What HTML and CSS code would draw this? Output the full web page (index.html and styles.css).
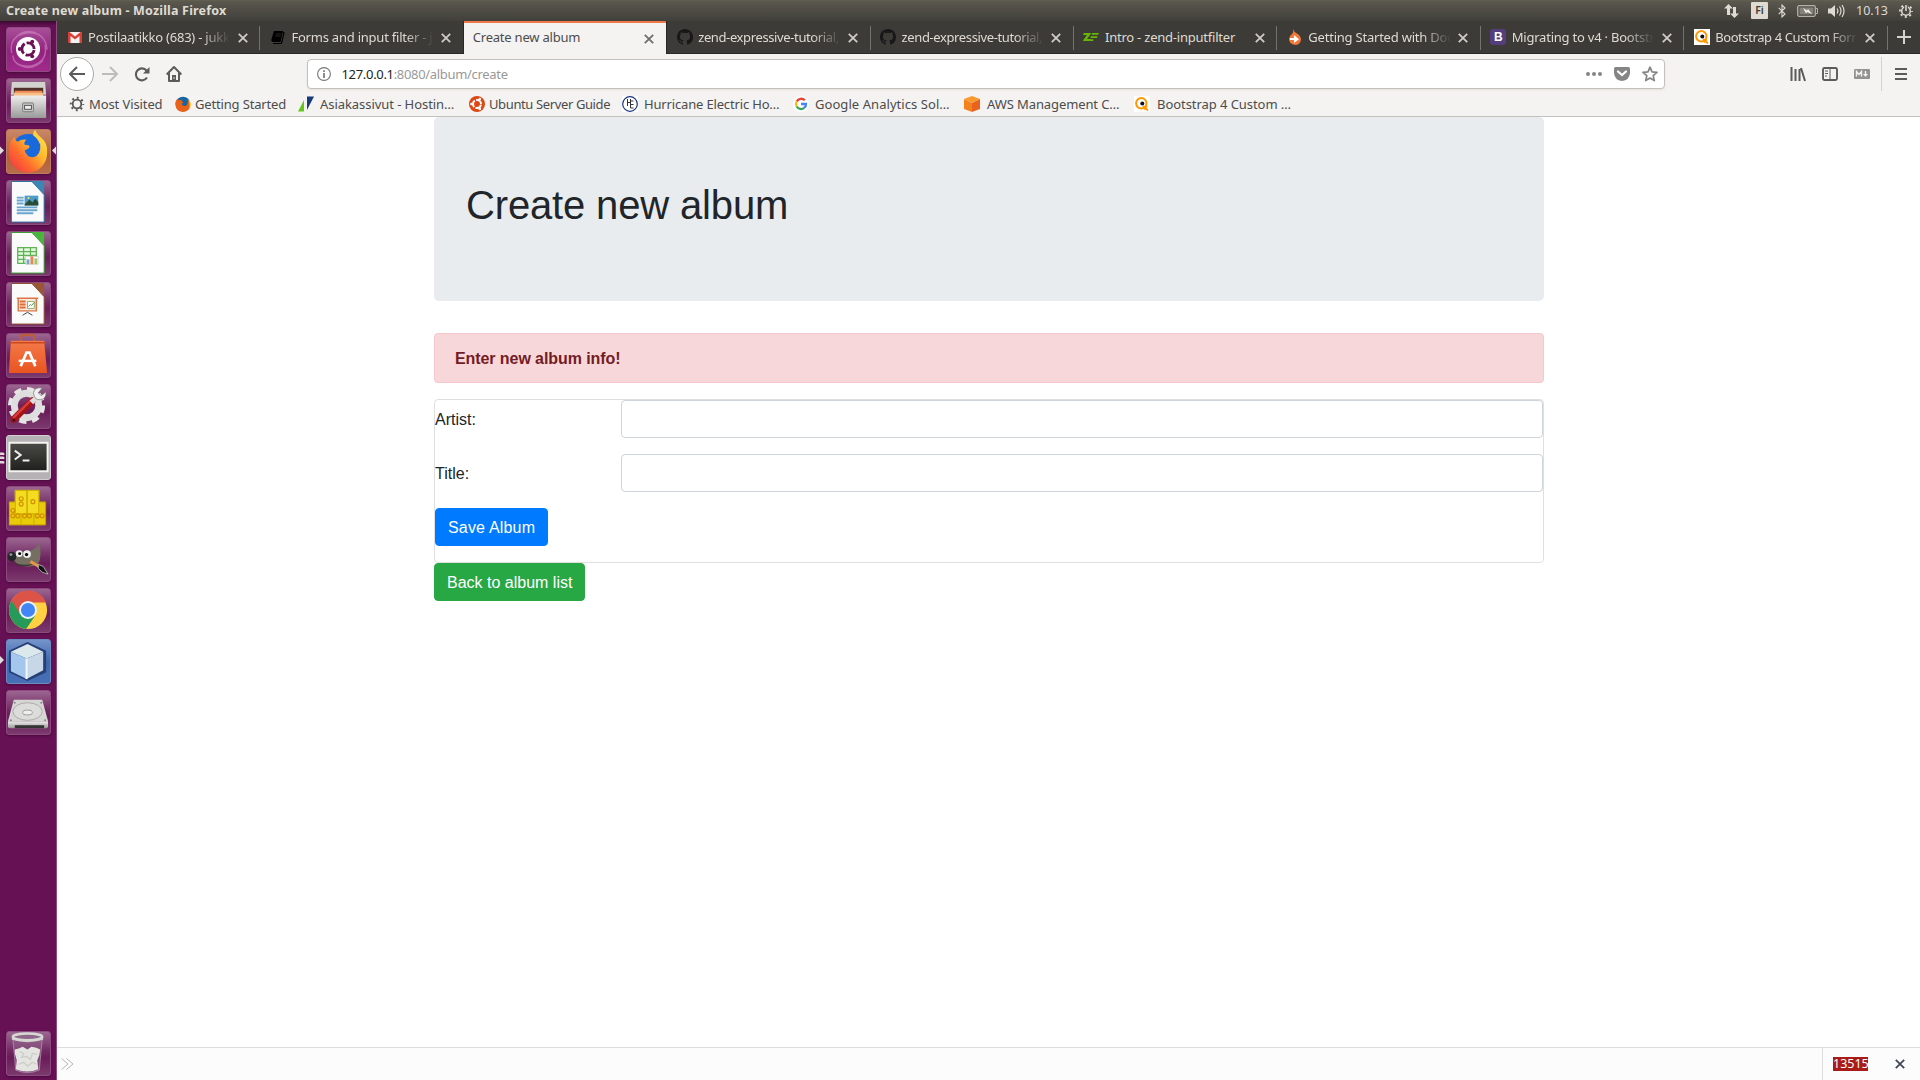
FILE: index.html
```html
<!DOCTYPE html>
<html lang="en">
<head>
<meta charset="utf-8">
<title>Create new album</title>
<link rel="stylesheet" href="styles.css">
</head>
<body>
<svg class="defs" width="0" height="0">
  <defs>
    <linearGradient id="silver" x1="0" y1="0" x2="0" y2="1"><stop offset="0" stop-color="#eeeeec"/><stop offset="1" stop-color="#999"/></linearGradient>
    <linearGradient id="orange" x1="0" y1="0" x2="0" y2="1"><stop offset="0" stop-color="#f47a4a"/><stop offset="1" stop-color="#e95420"/></linearGradient>
    <linearGradient id="flame" x1="1" y1="0" x2="0" y2="1"><stop offset="0" stop-color="#fff14f"/><stop offset=".4" stop-color="#ffb52e"/><stop offset=".65" stop-color="#ff6b2d"/><stop offset="1" stop-color="#f02b4b"/></linearGradient>
    <linearGradient id="screen" x1="0" y1="0" x2="0" y2="1"><stop offset="0" stop-color="#4a4a46"/><stop offset="1" stop-color="#1f1f1d"/></linearGradient>
    <symbol id="x" viewBox="0 0 10 10"><path d="M.8.8l8.4 8.4M9.2.8L.8 9.2" stroke="currentColor" stroke-width="1.8" fill="none"/></symbol>
    <symbol id="cat" viewBox="0 0 16 16"><path fill="#191717" d="M8 0C3.58 0 0 3.58 0 8c0 3.54 2.29 6.53 5.47 7.59.4.07.55-.17.55-.38 0-.19-.01-.82-.01-1.49-2.01.37-2.53-.49-2.69-.94-.09-.23-.48-.94-.82-1.13-.28-.15-.68-.52-.01-.53.63-.01 1.08.58 1.23.82.72 1.21 1.87.87 2.33.66.07-.52.28-.87.51-1.07-1.78-.2-3.64-.89-3.64-3.95 0-.87.31-1.59.82-2.15-.08-.2-.36-1.02.08-2.12 0 0 .67-.21 2.2.82a7.6 7.6 0 0 1 4 0c1.53-1.04 2.2-.82 2.2-.82.44 1.1.16 1.92.08 2.12.51.56.82 1.27.82 2.15 0 3.07-1.87 3.75-3.65 3.95.29.25.54.73.54 1.48 0 1.07-.01 1.93-.01 2.2 0 .21.15.46.55.38A8.01 8.01 0 0 0 16 8c0-4.42-3.58-8-8-8z"/></symbol>
    <symbol id="q" viewBox="0 0 16 16"><path fill="#fff" d="M0 0h16v16H0z"/><circle cx="7.3" cy="7.3" r="5.2" fill="none" stroke="#ff9800" stroke-width="2"/><path d="M9 10l5 4.5M10 13.5l3-3" stroke="#ff9800" stroke-width="1.7"/><circle cx="8.3" cy="7.5" r="2" fill="#111"/></symbol>
  </defs>
</svg>

<header class="panel">
  <span class="panel-title">Create new album - Mozilla Firefox</span>
  <div class="indicators">
    <svg class="i-net" viewBox="0 0 15 14"><path fill="#dfdbd2" d="M4.5 0L9 4.500H6V11H3V4.500H0zM10.500 14L6 9.500h3V3h3v6.500h3z"/></svg>
    <span class="i-lang">Fi</span>
    <svg class="i-bt" viewBox="0 0 8 14"><path d="M.7 3.800l6.300 6.200L4 13V1l3 3-6.300 6.200" fill="none" stroke="#dfdbd2" stroke-width="1.100"/></svg>
    <svg class="i-bat" viewBox="0 0 21 12"><rect x=".7" y=".7" width="17.600" height="10.600" rx="1.500" fill="none" stroke="#b5b1a9" stroke-width="1.300"/><rect x="2.500" y="2.500" width="14" height="7" fill="#85827a"/><path d="M18.500 3.500h2v5h-2" fill="none" stroke="#b5b1a9"/><path d="M6 3l4 2.500 1-1.500 4 5-5-2-1 1.500z" fill="#eee"/></svg>
    <svg class="i-vol" viewBox="0 0 17 14"><path fill="#dfdbd2" d="M0 4.500h3L7 1v12L3 9.500H0z"/><path d="M9 4.500q1.800 2.500 0 5M11.500 2.500q3 4.500 0 9M14 1q4 6 0 12" fill="none" stroke="#dfdbd2" stroke-width="1.200"/></svg>
    <span class="clock">10.13</span>
    <svg class="i-cog" viewBox="0 0 14 14"><circle cx="7" cy="7" r="4.300" fill="none" stroke="#dfdbd2" stroke-width="1.500"/><circle cx="7" cy="7" r="6" fill="none" stroke="#dfdbd2" stroke-width="1.800" stroke-dasharray="2 2.712" stroke-dashoffset="1"/><path d="M5.200 0h3.600v6.500H5.200z" fill="#504e47"/><path d="M7 1v6" stroke="#dfdbd2" stroke-width="1.500"/></svg>
  </div>
</header>

<div class="desktop">
<nav class="launcher">
  <div class="tile dash"><svg viewBox="0 0 46 46"><path d="M6 27Q2 9 22 6q18-1 20 17M40 18q3 18-15 22-17 1-18-11M11 37Q25 47 38 34M34 8q-15-9-27 6" fill="none" stroke="#d990c8" stroke-opacity=".55" stroke-width="1.500"/><circle cx="22.500" cy="22.500" r="12.300" fill="#fff"/><circle cx="22.500" cy="22.500" r="6.300" fill="none" stroke="#6b1255" stroke-width="2.900" stroke-dasharray="11.200 2" stroke-dashoffset="-1"/><g fill="#6b1255"><circle cx="14" cy="22.500" r="2"/><circle cx="26.800" cy="15" r="2"/><circle cx="26.800" cy="30" r="2"/></g></svg></div>
  <div class="tile"><svg viewBox="0 0 46 46"><path d="M6 4h34l1 13H5z" fill="#d2d2cf"/><path d="M8 10h30v9H8z" fill="#503028"/><path d="M9 13h28v3H9z" fill="#ed8850"/><path d="M8 15h30v4H8z" fill="#f7c089"/><path d="M5 18h36v22q0 1-1 1H6q-1 0-1-1z" fill="url(#silver)"/><rect x="17" y="25.500" width="11" height="9" rx="1" fill="#c9c9c9" stroke="#777"/><rect x="19" y="28" width="7" height="4" fill="#eee" stroke="#555"/></svg></div>
  <div class="tile fox"><svg viewBox="0 0 46 46"><circle cx="23" cy="23" r="18" fill="#1769dc"/><path d="M3 18Q5 11 9 8q0 4 3 5 4-3 9-2-3 2-2 5 5 0 5 2 0 2-5 4 2 7 9 7 8-3 7-13-3-7-7-9-1-4 2-6 1 4 6 8 7 6 6 15A19.500 19.500 0 0 1 3 26z" fill="url(#flame)"/></svg></div>
  <div class="tile"><svg viewBox="0 0 46 46"><path d="M5.500 1.500h21L39 15v28H5.500z" fill="#fafafa" stroke="#276d9c"/><path d="M26 1h13v14z" fill="#3c86b5"/><path d="M11 17h7v2h-7zm0 3h7v2h-7zm0 3h7v2h-7zm0 4h21v2H11zm0 3h21v2H11zm0 3h17v2H11z" fill="#6ba6cf"/><path d="M19 16h14v10H19z" fill="#4c9bc8"/><path d="M19 25l5-5 3 3 3-4 3 4v3H19z" fill="#274d37"/><circle cx="23" cy="18.500" r="1" fill="#ffe86c"/></svg></div>
  <div class="tile"><svg viewBox="0 0 46 46"><path d="M5.500 1.500h21L39 15v28H5.500z" fill="#fafafa" stroke="#359b2d"/><path d="M26 1h13v14z" fill="#49b53d"/><path d="M12 17h19v16H12zM12 21h19M12 25h19M12 29h19M18 17v16M25 17v16" fill="#e5f9df" stroke="#5fb253" stroke-width="1.300"/><path d="M20 26h13v8H20z" fill="#fff" stroke="#bbb" stroke-width=".5"/><path d="M21 29h3v5h-3z" fill="#72a8d4"/><path d="M25 26h3v8h-3z" fill="#ef8450"/><path d="M29 28h3v6h-3z" fill="#9fc773"/></svg></div>
  <div class="tile"><svg viewBox="0 0 46 46"><path d="M5.500 1.500h21L39 15v28H5.500z" fill="#fafafa" stroke="#8d482a"/><path d="M26 1h13v14z" fill="#9b5735"/><path d="M11 16.500h22M12.500 17v12.500h18.500V17" fill="#fbe8dc" stroke="#d97748" stroke-width="1.500"/><path d="M14 20h6m-6 3h6m-6 3h6" stroke="#db6c38" stroke-width="2"/><path d="M22 20h7v7h-7z" fill="#fff" stroke="#8ab26d"/><path d="M23 25l2-2 1 1 3-3" stroke="#4d9847" fill="none"/><path d="M17 34l5-3 5 3" stroke="#444" fill="none"/></svg></div>
  <div class="tile"><svg viewBox="0 0 46 46"><path d="M15 13V4q0-2 2-2h10q2 0 2 2v9" fill="none" stroke="#bd5c3d" stroke-width="2.500"/><path d="M5 8h34l3 33H3z" fill="url(#orange)"/><path d="M4 10h37" stroke="#c94a1f" stroke-width="1.500"/><path d="M15 34l6-14h3l6 14" fill="none" stroke="#fff" stroke-width="2.800"/><path d="M13 28.500h18" stroke="#fff" stroke-width="2.500"/></svg></div>
  <div class="tile"><svg viewBox="0 0 46 46"><circle cx="21" cy="22" r="12.500" fill="none" stroke="#dedede" stroke-width="7"/><circle cx="21" cy="22" r="17" fill="none" stroke="#e5e5e5" stroke-width="4" stroke-dasharray="7.400 5.950"/><path d="M8 36l19-19" stroke="#a31515" stroke-width="7" stroke-linecap="round"/><path d="M8 34l18-18" stroke="#d73c3c" stroke-width="2.500" stroke-linecap="round"/><path d="M26 19l5-5" stroke="#ddd" stroke-width="5"/><path d="M37 4q-8-1-9 5 1 8 7 7 6 0 6-8l-5 4-3-3z" fill="#eee" stroke="#777" stroke-width=".7"/><circle cx="8" cy="37" r="1.500" fill="#4b1020"/></svg></div>
  <div class="tile term"><svg viewBox="0 0 46 46"><path d="M3.500 8h39v29h-39z" fill="url(#screen)" stroke="#f3f3f1" stroke-width="2"/><path d="M9 16l6 4.500-6 4.500M17 26h7" fill="none" stroke="#eee" stroke-width="2"/></svg></div>
  <div class="tile"><svg viewBox="0 0 46 46"><path d="M3 16h37v24H3z" fill="#e9cb09"/><path d="M9 4h25v24H9z" fill="#f4dc20"/><path d="M9.500 4.500h12v24h-12zM21.500 4.500h12v24h-12zM3.500 16.500h6M3.500 16.500v23h12v-11M15.500 39.500h13v-11M28.500 39.500h12v-23h-6" fill="none" stroke="#cda900"/><g fill="none" stroke="#d09000" stroke-width="1.200"><circle cx="15.500" cy="13" r="2"/><circle cx="15.500" cy="18.500" r="2"/><circle cx="27.500" cy="16" r="2"/><circle cx="7" cy="25" r="2"/><circle cx="7" cy="30.500" r="2"/><circle cx="12" cy="30.500" r="2"/><circle cx="19" cy="30.500" r="2"/><circle cx="24" cy="30.500" r="2"/><circle cx="32" cy="30.500" r="2"/><circle cx="37" cy="30.500" r="2"/></g></svg></div>
  <div class="tile"><svg viewBox="0 0 46 46"><path d="M5 20q5-7 12-5 12 1 17-9 3 15-1 21-10 7-22 0z" fill="#756f63"/><path d="M6 24q8 7 24 3-12 6-22 0z" fill="#3e392f"/><ellipse cx="6" cy="20" rx="4.500" ry="5" fill="#25272a"/><circle cx="5" cy="18" r="1.500" fill="#999"/><circle cx="13.500" cy="17" r="3.400" fill="#eee"/><circle cx="21.500" cy="17.500" r="4" fill="#eee"/><circle cx="14" cy="17" r="1.500"/><circle cx="21" cy="18" r="1.700"/><path d="M25 25l10 6" stroke="#e89745" stroke-width="3"/><path d="M33 28l5 2 5 8q-7-1-10-6z" fill="#141414" stroke="#ddd" stroke-width=".7"/></svg></div>
  <div class="tile"><svg viewBox="0 0 46 46"><circle cx="22.500" cy="22.500" r="19.500" fill="#ffd140"/><path d="M22.500 22.500L5.600 12.700a19.500 19.500 0 0 0 14.900 29.200l9-13z" fill="#269b59"/><path d="M5.600 12.700a19.500 19.500 0 0 1 35.200 2H22.500l-8 12z" fill="#dc5347"/><circle cx="22.500" cy="22.500" r="9.200" fill="#eef2f6"/><circle cx="22.500" cy="22.500" r="7.200" fill="#4285f4"/></svg></div>
  <div class="tile cube"><svg viewBox="0 0 46 46"><path d="M22 3l19 9v22L22 43 3 34V12z" fill="#263f75"/><path d="M22 5l16 8-17 7-16-7z" fill="#dce9ec"/><path d="M5 13l16 7v21L5 33z" fill="#a5c6ed"/><path d="M38 13l-17 7v21l17-9z" fill="#c7d7e7"/><path d="M21 20v21" stroke="#f0f8ff" stroke-width="2"/></svg></div>
  <div class="tile"><svg viewBox="0 0 46 46"><path d="M8 10h29l6 22H2z" fill="#d6d6d4"/><path d="M2 32h41v5q0 2-2 2H4q-2 0-2-2z" fill="url(#silver)"/><path d="M9 36h30v3H9z" fill="#343434"/><ellipse cx="22" cy="22" rx="15" ry="9" fill="#dcdcda" stroke="#aaa"/><ellipse cx="22" cy="23" rx="5" ry="2.500" fill="#eee" stroke="#999"/><g fill="#888"><circle cx="9" cy="13" r="1"/><circle cx="36" cy="13" r="1"/><circle cx="5" cy="31" r="1"/><circle cx="40" cy="31" r="1"/></g></svg></div>
  <div class="tile trash"><svg viewBox="0 0 46 46"><path d="M7 8h30l-3 32q-12 5-24 0z" fill="#966d92" fill-opacity=".45" stroke="#baa0b7" stroke-width=".7"/><path d="M9 19l4-1 4-2 5 3 4-3 5 1 4 2-1 6-2 5 1 9q-11 5-23 0l1-9-2-7z" fill="#e4e4e1"/><path d="M14 21l4 2-2 4 5-1 4 3 2-6 5 1M13 34l5-2 4 4 5-4 4 2" fill="none" stroke="#cbcbc8" stroke-width="1.300"/><path d="M6 6v3q16 5 32 0V6q-16 5-32 0" fill="#c8c8c5"/><ellipse cx="22" cy="6" rx="15" ry="3.500" fill="#8d6888" stroke="#d7d7d4" stroke-width="2.500"/></svg></div>
  <svg class="marks" viewBox="0 0 57 1059"><path d="M0 125.500l4 4-4 4zM56 125.500l-4 4 4 4zM0 635l4 4-4 4z" fill="#e0dde0"/><path d="M0 431.500h3q1.500 0 1.500 1.500T3 434H0zM0 435.500h3q1.500 0 1.500 1.500T3 438H0zM0 440h3q1.500 0 1.500 1.500T3 442.500H0z" fill="#ded8dd"/></svg>
</nav>

<main class="browser">
  <div class="tabs">
    <div class="tab sep"><svg viewBox="0 0 16 16"><path d="M1 3h14v11H1z" fill="#f2f2f2"/><path d="M1 3v11h2.500V7L8 10.500 12.500 7v7H15V3h-1.500L8 7.500 2.500 3z" fill="#d93f35"/></svg><span class="label fade">Postilaatikko (683) - jukk</span><svg class="close"><use href="#x"/></svg></div>
    <div class="tab"><svg viewBox="0 0 16 16"><path d="M4 2h9l-2.500 11H2.500q-2-1-1-3z" fill="#000"/><path d="M13 3l1 1-2.500 10.500H3" fill="none" stroke="#000" stroke-width="1.200"/><path d="M6 5h5M5.500 7h5" stroke="#3c3b37" stroke-width=".7"/></svg><span class="label fade">Forms and input filter - ja</span><svg class="close"><use href="#x"/></svg></div>
    <div class="tab active"><span class="label">Create new album</span><svg class="close"><use href="#x"/></svg></div>
    <div class="tab sep"><svg><use href="#cat"/></svg><span class="label fade zend">zend-expressive-tutorial,</span><svg class="close"><use href="#x"/></svg></div>
    <div class="tab sep"><svg><use href="#cat"/></svg><span class="label fade zend">zend-expressive-tutorial,</span><svg class="close"><use href="#x"/></svg></div>
    <div class="tab sep"><svg viewBox="0 0 16 16"><path d="M1 4h7l-1 2-3 4h4l-1 2H0l1-2 3-4H0zM9 4h7l-1 1.800H8.500zM8 7.200h6.500L14 9H7.300zM7 10.200h3.500L10 12H6.300z" fill="#68b604"/></svg><span class="label">Intro - zend-inputfilter</span><svg class="close"><use href="#x"/></svg></div>
    <div class="tab sep"><svg viewBox="0 0 16 16"><path d="M6 0q1 3 4 4.500 4 2 4 6.500-1 5-6 5-6-1-6-6 0-3 3-5 2-2 1-5z" fill="#f37736"/><path d="M3 9h4V6l5 4.200L7 14v-3H3z" fill="#fff"/></svg><span class="label fade">Getting Started with Doc</span><svg class="close"><use href="#x"/></svg></div>
    <div class="tab sep"><span class="bs">B</span><span class="label fade">Migrating to v4 · Bootstr</span><svg class="close"><use href="#x"/></svg></div>
    <div class="tab sep"><svg><use href="#q"/></svg><span class="label fade form">Bootstrap 4 Custom Forr</span><svg class="close"><use href="#x"/></svg></div>
    <svg class="plus" viewBox="0 0 14 14"><path d="M7 0v14M0 7h14" stroke="#d5d3cf" stroke-width="2"/></svg>
  </div>

  <div class="toolbar">
    <span class="back"><svg viewBox="0 0 16 16"><path d="M16 8H1.500M8 1L1 8l7 7" fill="none" stroke="#5b5b5b" stroke-width="2"/></svg></span>
    <svg class="fwd" viewBox="0 0 16 16"><path d="M0 8h14.500M8 1l7 7-7 7" fill="none" stroke="#bdbcbb" stroke-width="2"/></svg>
    <svg class="reload" viewBox="0 0 16 16"><path d="M13 11.500A6 6 0 1 1 12.500 4.500" fill="none" stroke="#5b5b5b" stroke-width="2.100"/><path d="M15.500 1v6.500H9z" fill="#5b5b5b"/></svg>
    <svg class="home" viewBox="0 0 16 16"><path d="M.7 8.500L8 1l7.300 7.500M3 7v8h10V7" fill="none" stroke="#5b5b5b" stroke-width="2" stroke-linejoin="round"/><path d="M6 9h4v6H6z" fill="#5b5b5b"/><path d="M8 11v2" stroke="#ddd"/></svg>
    <div class="urlbar">
      <svg viewBox="0 0 14 14"><circle cx="7" cy="7" r="6.400" fill="none" stroke="#777" stroke-width="1.100"/><path d="M7 6v5M7 3.200v1.700" stroke="#777" stroke-width="1.700"/></svg>
      <span class="url"><b>127.0.0.1</b>:8080/album/create</span>
      <svg class="dots" viewBox="0 0 16 16"><g fill="#858585"><circle cx="2" cy="8" r="2"/><circle cx="8" cy="8" r="2"/><circle cx="14" cy="8" r="2"/></g></svg>
      <svg viewBox="0 0 16 16"><path d="M1.500 1h13Q16 1 16 2.500V7q-.5 7-8 8Q.500 14 0 7V2.500Q0 1 1.500 1z" fill="#858585"/><path d="M4 5.500L8 9l4-3.500" fill="none" stroke="#fff" stroke-width="2.200" stroke-linecap="round"/></svg>
      <svg viewBox="0 0 16 16"><path d="M8 1.200l2 4.600 5 .5-3.800 3.300 1.100 5L8 12l-4.300 2.600 1.100-5L1 6.300l5-.5z" fill="none" stroke="#858585" stroke-width="1.700" stroke-linejoin="round"/></svg>
    </div>
    <div class="tools">
      <svg viewBox="0 0 16 16"><path d="M1.500 1v14M5.500 3v12M9.500 3v12M11 2l4 13" fill="none" stroke="#5b5b5b" stroke-width="2"/></svg>
      <svg viewBox="0 0 16 16"><rect x="1" y="2" width="14" height="12" rx="1.500" fill="none" stroke="#5b5b5b" stroke-width="1.900"/><path d="M8 2v12M3 5h3M3 7.500h3M3 10h2" stroke="#5b5b5b"/></svg>
      <svg viewBox="0 0 16 16"><rect y="3" width="16" height="10" rx="1" fill="#929292"/><path d="M2.500 10.500v-5l2.500 3 2.500-3v5M11.500 5v4" fill="none" stroke="#f4f3f1" stroke-width="1.400"/><path d="M9 8h5l-2.500 3z" fill="#f4f3f1"/></svg>
    </div>
    <svg class="menu" viewBox="0 0 12 14"><path d="M0 2h12M0 7h12M0 12h12" stroke="#5b5b5b" stroke-width="1.900"/></svg>
  </div>

  <div class="bookmarks">
    <span><svg viewBox="0 0 16 16"><circle cx="8" cy="8" r="4.300" fill="none" stroke="#555" stroke-width="1.800"/><circle cx="8" cy="8" r="6.200" fill="none" stroke="#555" stroke-width="2" stroke-dasharray="1.900 2.970" stroke-dashoffset=".95"/></svg><i class="b1">Most Visited</i></span>
    <span><svg viewBox="0 0 46 46"><circle cx="23" cy="23" r="21" fill="#17669f"/><path d="M1 18Q5 8 9 8q0 4 3 5 4-3 9-2-3 2-2 5 5 0 5 2 0 2-5 4 2 7 9 7 11-2 8-18 13 11 5 26Q35 46 22 46 3 44 1 25z" fill="#e96218"/><path d="M38 9q15 14 2 30 5-12-2-30z" fill="#ffd33a"/></svg><i class="b2">Getting Started</i></span>
    <span class="wide"><svg viewBox="0 0 16 16"><path d="M0 15.500L6 4v11.500z" fill="#62c71b"/><path d="M9 .5h7L9 14z" fill="#173b78"/></svg><i class="b3">Asiakassivut - Hostin…</i></span>
    <span><svg viewBox="0 0 16 16"><circle cx="8" cy="8" r="8" fill="#dd4814"/><circle cx="8" cy="8" r="4" fill="none" stroke="#fff" stroke-width="2" stroke-dasharray="7 1.370" stroke-dashoffset="-.7"/><g fill="#fff"><circle cx="2.500" cy="8" r="1.300"/><circle cx="10.800" cy="3.100" r="1.300"/><circle cx="10.800" cy="12.900" r="1.300"/></g></svg><i class="b4">Ubuntu Server Guide</i></span>
    <span class="wide"><svg viewBox="0 0 16 16"><path d="M0 0h16v16H0z" fill="#fff"/><circle cx="8" cy="8" r="7.300" fill="#fff" stroke="#1b357c" stroke-width="1.200"/><path d="M5.500 3v7M8.500 3v9M5.500 6.500h3M8.500 5h3M8.500 8.500h3M8.500 12h3" stroke="#333" fill="none"/></svg><i class="b5">Hurricane Electric Ho…</i></span>
    <span class="wide"><svg viewBox="0 0 16 16"><circle cx="8" cy="8" r="8" fill="#fff"/><g fill="none" stroke-width="2.300"><path d="M11.800 4.300A5 5 0 0 0 3.700 5.500" stroke="#ea4335"/><path d="M3.700 5.500a5 5 0 0 0 0 5" stroke="#fbbc05"/><path d="M3.700 10.500a5 5 0 0 0 7.500 1.400" stroke="#34a853"/><path d="M11.200 11.900A5 5 0 0 0 13 8H8" stroke="#4285f4"/></g></svg><i class="b6">Google Analytics Sol…</i></span>
    <span class="wider"><svg viewBox="0 0 16 16"><path d="M8 0l8 3-8 4-8-4z" fill="#fa9a2d"/><path d="M0 3l8 4v9l-8-3z" fill="#f58020"/><path d="M16 3L8 7v9l8-3z" fill="#e8641e"/></svg><i class="b7">AWS Management C…</i></span>
    <span class="wider"><svg><use href="#q"/></svg><i class="b8">Bootstrap 4 Custom …</i></span>
  </div>

  <div class="page">
    <div class="container">
      <div class="jumbotron"><h1>Create new album</h1></div>
      <div class="alert">Enter new album info!</div>
      <form class="card">
        <div class="row"><label for="artist">Artist:</label><input id="artist" type="text"></div>
        <div class="row"><label for="title">Title:</label><input id="title" type="text"></div>
        <div class="row"><button class="btn primary" type="button">Save Album</button></div>
      </form>
      <a class="btn success">Back to album list</a>
    </div>
  </div>

  <footer class="devbar">
    <svg class="chev" viewBox="0 0 13 12"><path d="M.5.5L7 6 .5 11.500M5.500.5L12 6l-6.500 5.500" fill="none" stroke="#b5b5b5"/></svg>
    <div class="devinfo"><span class="count">13515</span><svg class="devx"><use href="#x"/></svg></div>
  </footer>
</main>
</div>
</body>
</html>
```
FILE: styles.css
```css
* { box-sizing: border-box; }
body { margin: 0; width: 1920px; height: 1080px; overflow: hidden; display: flex; flex-direction: column; background: #fff; font: 13px/18px "Noto Sans", "Open Sans", sans-serif; }
.defs { position: absolute; }
svg { display: block; flex: none; }

.panel { height: 21px; flex: none; display: flex; align-items: center; justify-content: space-between; padding: 0 7px 0 6px; background: linear-gradient(#63614f, #5a574e 8%, #403f3a); color: #dfdbd2; }
.panel-title { font-weight: 700; font-size: 12.5px; letter-spacing: .18px; }
.indicators { display: flex; align-items: center; }
.i-net { width: 15px; height: 14px; margin-right: 12px; }
.i-lang { width: 17px; height: 17px; border-radius: 1px; background: #dfdbd2; color: #3c3b37; font-size: 10.5px; font-weight: 600; line-height: 17px; text-align: center; margin-right: 10px; }
.i-bt { width: 8px; height: 14px; margin-right: 11px; }
.i-bat { width: 21px; height: 12px; margin-right: 10px; }
.i-vol { width: 17px; height: 14px; margin-right: 11px; }
.clock { width: 31px; font-size: 12.5px; margin-right: 12px; white-space: nowrap; }
.i-cog { width: 14px; height: 14px; }

.desktop { flex: 1; display: flex; min-height: 0; }
.launcher { position: relative; width: 57px; flex: none; display: flex; flex-direction: column; gap: 6px; padding: 6px 0 4px 6px; background: linear-gradient(#3a0a30, #651154 5px); border-right: 1px solid #8a4f7e; }
.tile { width: 45px; height: 45px; flex: none; border-radius: 3px; border: 1px solid #8c4a7e; background: linear-gradient(#9c6691, #702861 45%, #6a1b5a 60%, #7b3a6d); box-shadow: 0 1px 2px #4a0a3d; }
.tile svg { width: 45px; height: 45px; margin: -1px; }
.tile.dash { background: linear-gradient(#a85099, #92227f 55%, #a02b8b); }
.tile.fox { background: linear-gradient(#c98868, #b15f3b 60%, #b86d4a); border-color: #bd7c60; }
.tile.term { background: #b5b1b5; border-color: #d1cdd1; }
.tile.cube { background: linear-gradient(#7594c9, #3e68b2 50%, #4770b6); border-color: #6d8bc3; }
.tile.trash { margin-top: auto; }
.marks { position: absolute; left: 0; top: 0; width: 57px; height: 1059px; }

.browser { flex: 1; min-width: 0; display: flex; flex-direction: column; }
.tabs { height: 33px; flex: none; display: flex; background: #3c3b37; border-bottom: 1px solid #2a2926; color: #dfdbd2; letter-spacing: -.22px; }
.tab { position: relative; width: 203.4px; flex: none; display: flex; align-items: center; padding: 0 12.5px 0 9.5px; gap: 5.5px; }
.tab > svg { width: 16px; height: 16px; }
.tab.sep::after { content: ""; position: absolute; right: 0; top: 5px; width: 1px; height: 24px; background: #74736f; }
.tab.active { width: 202.4px; margin-right: 1px; background: #f4f3f1; color: #4c4c4c; height: 33px; border-top: 2px solid #f07746; box-shadow: -1px 0 #282724, 1px 0 #282724; padding: 0 12px 2px 9px; }
.tab .close { width: 10px; height: 10px; color: #cfccc5; position: relative; top: 1px; }
.tab.active .close { color: #6f6e6c; }
.label { flex: 1; overflow: hidden; white-space: nowrap; position: relative; top: -.5px; }
.label.zend { letter-spacing: -.38px; }
.label.form { letter-spacing: -.4px; }
.label.fade { -webkit-mask-image: linear-gradient(90deg, #000 calc(100% - 31px), transparent calc(100% - 2px)); mask-image: linear-gradient(90deg, #000 calc(100% - 31px), transparent calc(100% - 2px)); }
.bs { width: 16px; height: 16px; border-radius: 3px; background: #563d7c; color: #fff; font: bold 12px/16px "Liberation Sans", sans-serif; text-align: center; }
.plus { width: 14px; height: 14px; margin: 9px 0 0 9.5px; }

.toolbar { height: 41px; flex: none; display: flex; align-items: center; background: #f4f3f1; padding: 0 0 1px 3px; }
.toolbar svg { width: 16px; height: 16px; }
.back { width: 34px; height: 34px; border: 1px solid #aaa; border-radius: 50%; background: #fff; display: flex; align-items: center; justify-content: center; }
.toolbar .fwd { margin-left: 8px; }
.toolbar .reload, .toolbar .home { margin-left: 16px; }
.urlbar { width: 1358px; height: 30px; margin-left: 125px; display: flex; align-items: center; gap: 12px; padding: 0 6px 0 9px; border: 1px solid #c5c0ba; border-radius: 4px; background: #fff; box-shadow: 0 1px 2px #e3e1de; }
.urlbar > svg:first-child { width: 14px; height: 14px; }
.url { flex: 1; margin-left: -1.5px; color: #999; letter-spacing: -.32px; }
.url b { font-weight: 400; color: #222; }
.tools { display: flex; gap: 16px; margin-left: 125px; padding-right: 11px; height: 34px; align-items: center; border-right: 1px solid #d4d2cf; }
.toolbar .menu { width: 12px; height: 14px; margin-left: 13px; }

.bookmarks { height: 22px; flex: none; display: grid; grid-template-columns: 106px 123px 171px 153px 171px 171px 170px 1fr; padding: 0 0 3px 12px; background: #f4f3f1; border-bottom: 1px solid #c3c1be; color: #4c4c4c; }
.bookmarks span { display: flex; align-items: center; gap: 4px; white-space: nowrap; }
.bookmarks span.wide { gap: 6px; }
.bookmarks span.wider { gap: 7px; }
.bookmarks svg { width: 16px; height: 16px; }
.bookmarks i { font-style: normal; }
.b1, .b7 { letter-spacing: -.1px; }
.b2, .b5 { letter-spacing: -.16px; }
.b3, .b8 { letter-spacing: -.06px; }
.b4 { letter-spacing: -.38px; }
.b6 { letter-spacing: .06px; }

.page { flex: 1; min-height: 0; font: 16px/24px "Liberation Sans", Arial, sans-serif; color: #212529; }
.container { width: 1110px; margin-left: 377px; }
.jumbotron { height: 184px; padding: 64px 32px; margin-bottom: 32px; background: #e9ecef; border-radius: 5px; }
h1 { margin: 0; font-size: 40px; line-height: 48px; font-weight: 400; letter-spacing: -.15px; }
.alert { padding: 13px 20px 11px; margin-bottom: 16px; border: 1px solid #f5c6cb; border-radius: 4px; background: #f8d7da; color: #721c24; font-weight: 700; letter-spacing: -.08px; }
.card { border: 1px solid #dfdfdf; border-radius: 4px; }
.row { display: flex; margin-bottom: 16px; }
label { width: 186.3px; padding: 8px 0 6px; }
input { flex: 1; height: 38px; border: 1px solid #ced4da; border-radius: 4px; padding: 6px 12px; }
.btn { display: inline-block; padding: 7px 12px 5px; border: 1px solid; border-radius: 4px; font: 16px/24px "Liberation Sans", Arial, sans-serif; color: #fff; }
.primary { background: #007bff; border-color: #007bff; letter-spacing: .18px; }
.success { background: #28a745; border-color: #28a745; }

.devbar { height: 33px; flex: none; display: flex; align-items: center; justify-content: space-between; padding-left: 4px; background: #fcfcfc; border-top: 1px solid #dcdcde; }
.chev { width: 13px; height: 12px; }
.devinfo { width: 98px; height: 32px; display: flex; align-items: center; justify-content: space-between; padding: 0 15px 0 10px; border-left: 1px solid #dcdcde; }
.count { width: 35px; height: 14px; background: #a81b17; color: #fff; font-size: 12.5px; line-height: 14px; text-align: center; }
.devx { width: 10px; height: 10px; color: #42475a; }
```
